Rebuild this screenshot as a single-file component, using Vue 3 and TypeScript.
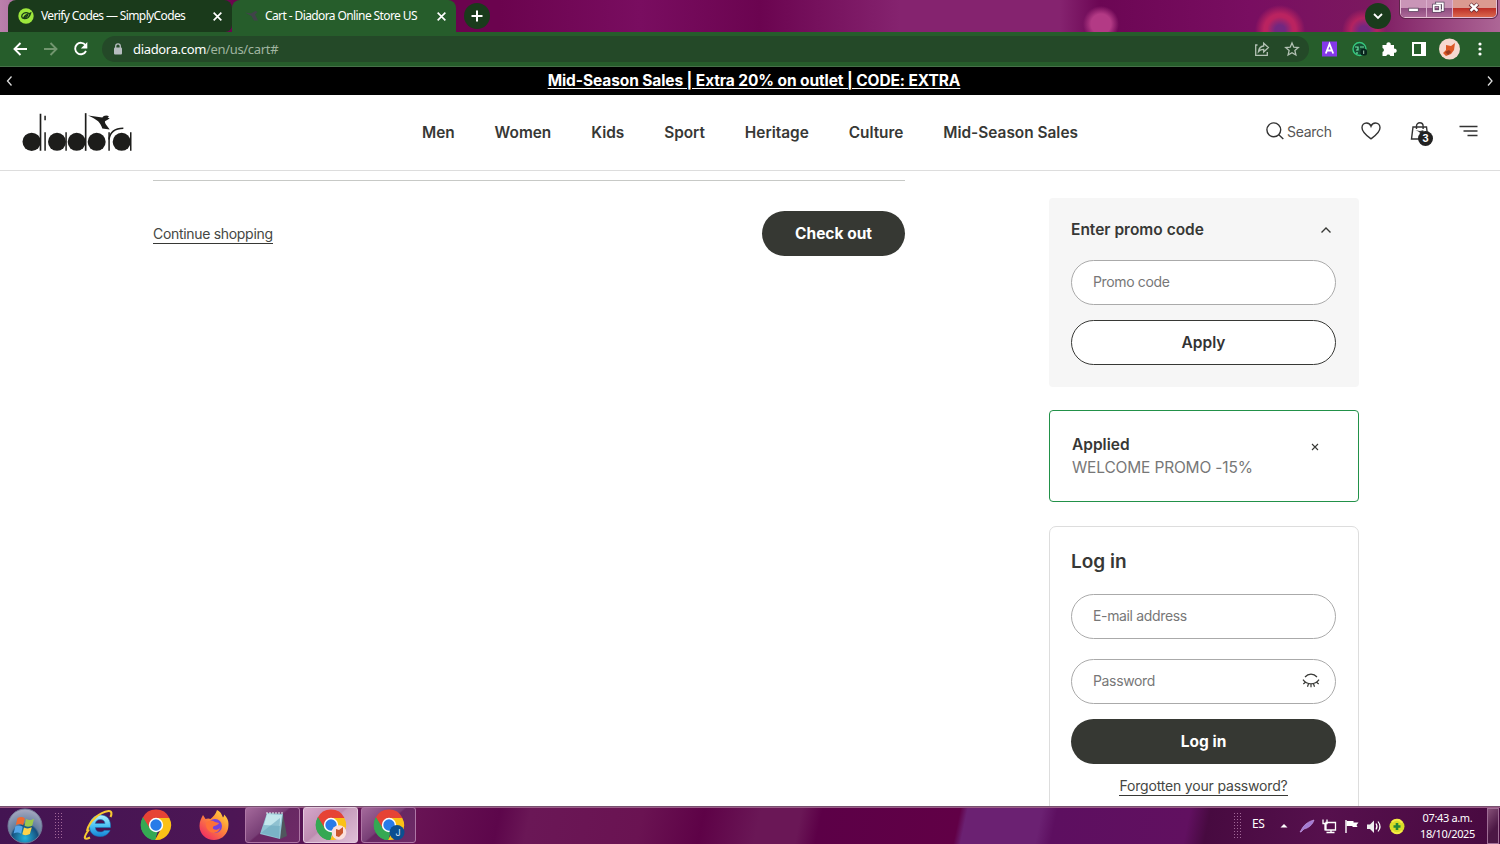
<script setup lang="ts">
const links: string[] = ['Men', 'Women', 'Kids', 'Sport', 'Heritage', 'Culture', 'Mid-Season Sales']
</script>

<template>
  <div class="screen">
    <div class="tabs">
      <div class="tab idle">
        <svg class="fav" viewBox="0 0 16 16"><circle cx="8" cy="8" r="7.700" fill="#9de83c" /><path d="M10.500 5.200C7 3.500 3.500 6 3.700 8.700c.3 2.500 4.300 2.500 6.500.8 1.700-1.500 2-3.200 2.400-4.500C10 5.700 7 6.500 6 9.300c1.500.3 3-.8 4-2.200" fill="none" stroke="#173a17" stroke-width="1.300" /></svg>
        <span class="t1">Verify Codes — SimplyCodes</span>
        <svg class="close" viewBox="0 0 10 10"><path d="M1.500 1.500l7 7M8.500 1.500l-7 7" stroke="#fff" stroke-width="1.500" /></svg>
      </div>
      <div class="tab active">
        <svg class="fav" viewBox="0 0 13 16"><path d="M0 4.500l6 1 4.500-2.500 2 1-2.500 2.500 3 6H9L6.500 8z" fill="#41434a" /></svg>
        <span class="t2">Cart - Diadora Online Store US</span>
        <svg class="close" viewBox="0 0 10 10"><path d="M1.500 1.500l7 7M8.500 1.500l-7 7" stroke="#fff" stroke-width="1.500" /></svg>
      </div>
      <div class="round plus"><svg viewBox="0 0 26 26"><path d="M13 7.500v11M7.500 13h11" stroke="#fff" stroke-width="2" /></svg></div>
      <div class="round chev"><svg viewBox="0 0 26 26"><path d="M9 11l4 4 4-4" fill="none" stroke="#fff" stroke-width="1.800" /></svg></div>
      <div class="winbtns">
        <div class="wb min"><svg viewBox="0 0 26 17"><rect x="8" y="8.500" width="10" height="3.500" fill="#fff" stroke="#594059" stroke-width=".8" /></svg></div>
        <div class="wb max"><svg viewBox="0 0 26 17"><g fill="none" stroke="#514058" stroke-width="3.200"><path d="M10 5V3.500h6.500v7H15" /><rect x="7" y="5.500" width="6.500" height="6" /></g><g fill="none" stroke="#fff" stroke-width="1.800"><path d="M10 4V3.500h6.500v7H15" /><rect x="7" y="5.500" width="6.500" height="6" /></g></svg></div>
        <div class="wb cls"><svg viewBox="0 0 44 17"><path d="M17.500 4l8 7.500M25.500 4l-8 7.500" stroke="#6b3038" stroke-width="4.200" /><path d="M18 4.200l7 7M25 4.200l-7 7" stroke="#fff" stroke-width="2.600" /></svg></div>
      </div>
    </div>

    <div class="toolbar">
      <svg class="navicons" viewBox="0 0 102 35"><g fill="none" stroke-width="1.900"><path d="M27 17H15M20.500 11l-6 6 6 6" stroke="#fff" /><path d="M44 17h12M50.500 11l6 6-6 6" stroke="#72966f" /><path d="M85.500 13.200A5.700 5.700 0 1 0 86 19" stroke="#fff" /></g><path d="M87.300 10v6.500h-6.500z" fill="#fff" /></svg>
      <div class="address">
        <svg class="lock" viewBox="0 0 10 12"><rect x="1" y="4.500" width="8" height="7" rx="1" fill="#b7bdc0" /><path d="M2.700 5V3.200a2.300 2.300 0 0 1 4.600 0V5" fill="none" stroke="#b7bdc0" stroke-width="1.300" /></svg>
        <span class="url"><b>diadora.com</b>/en/us/cart#</span>
        <svg class="addricons" viewBox="0 0 50 20"><g fill="none" stroke="#b4c2b5" stroke-width="1.300"><path d="M3.500 6H1.700v10.300h11.600V13" /><path d="M4.500 12.500c.5-3.500 2.500-5.300 5.200-5.500V4.200l4.700 4.400-4.700 4.300v-2.600c-2.300 0-4 .7-5.200 2.200z" /><path d="M38 4l1.800 4.200 4.500.4-3.400 3 1 4.400-3.900-2.300L34.100 16l1-4.400-3.400-3 4.500-.4z" /></g></svg>
      </div>
      <svg class="extensions" viewBox="0 0 180 35">
        <rect x="2" y="9.500" width="15" height="15" fill="#8538ea" /><path d="M5.800 21.500L9.500 12l3.700 9.500M7 18.500h5" stroke="#fff" stroke-width="1.800" fill="none" />
        <circle cx="39.500" cy="17" r="6.500" fill="#164e33" stroke="#35c77d" stroke-width="1.400" /><path d="M35 15h3v3h-2m4-3h4m-7 5v2" stroke="#70e5a5" stroke-width="1.200" fill="none" /><rect x="40.500" y="17" width="6.500" height="6.500" rx="2" fill="#07251c" /><path d="M43.700 18.500v3.500" stroke="#a1cdb3" />
        <path d="M62.500 13h4a2.200 2.200 0 1 1 4.200 0H74v3.700a2.100 2.100 0 1 1 0 4V24h-3.700a2.100 2.100 0 0 0-4 0h-3.800v-4a2.100 2.100 0 0 0 0-4z" fill="#fff" />
        <path d="M93 11h12v12H93z" fill="none" stroke="#fff" stroke-width="2" /><path d="M101 10h5v14h-5z" fill="#fff" />
        <circle cx="129.500" cy="17" r="10.500" fill="#f7d8cf" /><path d="M126 13l5 1 4-3-1 7-3 4-5 2-3-3 3-3z" fill="#db5725" /><path d="M125 20l4-2 2 2-3 3z" fill="#9d3b20" />
        <circle cx="160" cy="12" r="1.600" fill="#fff" /><circle cx="160" cy="17" r="1.600" fill="#fff" /><circle cx="160" cy="22" r="1.600" fill="#fff" />
      </svg>
    </div>

    <div class="banner">
      <svg viewBox="0 0 8 12"><path d="M6.500 1.500L2.500 6l4 4.500" /></svg>
      <a>Mid-Season Sales | Extra 20% on outlet | CODE: EXTRA</a>
      <svg viewBox="0 0 8 12"><path d="M2 1.500L6 6l-4 4.500" /></svg>
    </div>

    <header>
      <svg class="logo" viewBox="66 54 330 116" fill="#1d1d1b">
        <circle cx="95" cy="140" r="27.500" /><path d="M119 56h5v111h-5zM133 111h4.500v56H133zM133 62h4.500v13H133z" />
        <circle cx="171" cy="140" r="27" /><path d="M196 111h4.500v56H196z" /><circle cx="230" cy="140" r="27" /><path d="M254.500 54h5v113h-5z" />
        <circle cx="290" cy="140" r="27" /><path d="M325 111h4.500v56H325z" /><path d="M327 133c3-23 17-34 43-34" fill="none" stroke="#1d1d1b" stroke-width="4.500" /><circle cx="365" cy="140" r="27" /><path d="M390 111h4.500v56H390z" />
        <path d="M264 61c15 1 28 5 43 6 3-7 14-8 20-4l-4 4 6 3-14 8c-2 6 8 15 14 25l-22-3c-5-17-14-27-43-39z" />
      </svg>
      <nav><a v-for="link in links" :key="link">{{ link }}</a></nav>
      <div class="tools">
        <svg class="search" viewBox="0 0 18 18"><circle cx="7.800" cy="7.800" r="6.900" /><path d="M12.800 12.800l4.500 4.300" /></svg>
        <span>Search</span>
        <svg class="heart" viewBox="0 0 20 18"><path d="M10 16.800C7 14.500 1 10.500 1 5.700 1 3 3 1 5.500 1 7.500 1 9.300 2.300 10 4.200 10.700 2.300 12.500 1 14.500 1 17 1 19 3 19 5.700c0 4.800-6 8.800-9 11.100z" /></svg>
        <div class="bag">
          <svg viewBox="0 0 20 18"><path d="M3 5h13.500L18 17H1.500zM6.500 7V4a3.300 3.300 0 0 1 6.600 0v3" /><path d="M5.500 8.200l4.500.8 3-.8 1 1-2 1 .5 2-2-.5C10 10.200 8 9.200 5.500 8.200z" fill="#333" stroke="none" /></svg>
          <i>3</i>
        </div>
        <svg class="menu" viewBox="0 0 20 12"><path d="M.5 1.500h18M4.500 6h14M8.500 10.500h10" /></svg>
      </div>
    </header>

    <main>
      <section class="cart">
        <a class="continue">Continue shopping</a>
        <button class="dark checkout">Check out</button>
      </section>
      <aside>
        <div class="promo">
          <div class="heading"><h3>Enter promo code</h3><svg viewBox="0 0 12 8"><path d="M1.500 6.500L6 2l4.500 4.500" fill="none" stroke="#373835" stroke-width="1.400" /></svg></div>
          <div class="field"><span class="pc">Promo code</span></div>
          <button class="apply">Apply</button>
        </div>
        <div class="applied">
          <div><h3>Applied</h3><p>WELCOME PROMO -15%</p></div>
          <svg viewBox="0 0 8 8"><path d="M1 1l6 6M7 1L1 7" stroke="#373835" stroke-width="1.100" /></svg>
        </div>
        <div class="login">
          <h2>Log in</h2>
          <div class="field"><span class="em">E-mail address</span></div>
          <div class="field second"><span class="pw">Password</span>
            <svg viewBox="0 0 18 16"><g fill="none" stroke="#373835" stroke-width="1.200"><path d="M3 4c3.400-3.900 8.600-3.900 12 0M1 6.700c4 5.500 12 5.500 16 0M3.800 9l-2.500 2M6.500 10.700l-1 3M9 11v3.300M11.500 10.700l1 3M14.200 9l2.500 2" /></g></svg>
          </div>
          <button class="dark signin">Log in</button>
          <a class="forgot">Forgotten your password?</a>
        </div>
      </aside>
    </main>

    <footer>
      <svg class="orb" viewBox="0 0 36 36"><defs><radialGradient id="orb" cx=".5" cy=".85" r=".8"><stop stop-color="#24b5dd" /><stop offset=".48" stop-color="#164e7d" /><stop offset=".55" stop-color="#637f9f" /><stop offset="1" stop-color="#a1a5bd" /></radialGradient></defs><circle cx="18" cy="18" r="17" fill="url(#orb)" stroke="#737b98" /><path d="M10.500 10c3-1.500 5-1.200 7.300.2l-1.600 7c-2.700-1.500-4.500-1.500-7.400-.2z" fill="#ef6a31" /><path d="M19 11c3 1.500 5 1.200 8-.3l-1.800 7c-2.700 1.200-5 1.400-7.700.1z" fill="#9bc84e" /><path d="M8.300 18.500c3-1.300 5-1.200 7.400.2l-1.600 7c-2.600-1.600-4.700-1.500-7.500-.2z" fill="#55a6ea" /><path d="M17 19.500c3 1.300 5 1.200 7.800-.2l-1.900 6.800c-2.700 1.300-5 1.500-7.600.2z" fill="#fed34b" /></svg>
      <div class="grip"></div>
      <div class="slot"><svg viewBox="0 0 32 32"><defs><linearGradient id="ie" x2="0" y2="1"><stop stop-color="#b5f3ff" /><stop offset=".5" stop-color="#4bc2f4" /><stop offset="1" stop-color="#1584d5" /></linearGradient></defs><path d="M28 21.500C26 25.500 22.500 27.500 18 27.500c-6.500 0-10.500-4-10.500-10C7.500 10.500 12 6 18.500 6 25.500 6 29 11 28.500 18.500H13.300c.3 3 2 4.500 4.800 4.500 2 0 3.200-.5 4-1.500zM13.300 14.500h9.700c-.3-2.700-2-4-4.700-4s-4.500 1.300-5 4z" fill="url(#ie)" stroke="#167abc" stroke-width=".6" /><path d="M7 20.500C1.500 28 1 32 8 28.500M5 22C7 12 18 3 26.500 2c3.500-.3 3.500 3 2 6" fill="none" stroke="#f7c832" stroke-width="2.100" /></svg></div>
      <div class="slot"><svg viewBox="0 0 32 32"><g id="chrome"><path d="M16 16L2.500 9A15 15 0 0 1 29.500 9z" fill="#e64335" /><path d="M16 16v15A15 15 0 0 1 2.700 8.600z" fill="#35a853" /><path d="M16 9h13.300A15 15 0 0 1 15 31l6.500-12z" fill="#fbc116" /><path d="M3 8.500L10 20l6-4V9z" fill="#e64335" /><path d="M3 8.500L10 20l8 2-3 9A15 15 0 0 1 3 8.500z" fill="#35a853" /><circle cx="16" cy="16" r="7.200" fill="#fff" /><circle cx="16" cy="16" r="5.700" fill="#287be8" /></g></svg></div>
      <div class="slot"><svg viewBox="0 0 32 32"><defs><linearGradient id="fx" x1="1" y1="0" x2=".2" y2="1"><stop stop-color="#ffe643" /><stop offset=".45" stop-color="#ff9037" /><stop offset="1" stop-color="#ef2865" /></linearGradient></defs><path d="M1.500 17c0-5 2-8 3.500-11l2.500 4c2-.8 3.500-.8 5 0C15 8 18 5 19 1c5 2.500 5 6 6 7.500 1-1.200 1-2 1-3C31 10 31 15 30 20c-2 7-7.500 11-14 11C8 31 1.500 25 1.500 17z" fill="url(#fx)" /><circle cx="17" cy="17" r="7" fill="#7542dd" /><path d="M8 14c3-3 6-3 9-1l4 1c-1 3-5 2-6 4-1 3 4 4 7 1-1 5-8 7-12 2-2-2-2-4-2-7z" fill="#ff7139" /></svg></div>
      <div class="slot task"><svg viewBox="0 0 32 32"><path d="M10 4l16 1 4 22-7 3z" fill="#4f565d" /><path d="M10 4l16 1-3 25-20-5z" fill="#8fc3d3" /><path d="M10 5l15 1-2 11L7 16z" fill="#c3e6ec" /><path d="M4 24L23 9l-1 20z" fill="#6ca9be" opacity=".6" /><path d="M10 3v2m3-2v2m3-2v2m3-2v2m3-2v2m3-2v2" stroke="#e9f6f7" /></svg></div>
      <div class="slot task current"><svg viewBox="0 0 32 32"><use href="#chrome" /><circle cx="24" cy="23.500" r="7.300" fill="#fbe0dc" /><path d="M21 20l3 1 4-3v6l-4 4-3-1z" fill="#cb552d" /></svg></div>
      <div class="slot task"><svg viewBox="0 0 32 32"><use href="#chrome" /><circle cx="24" cy="23.500" r="7.500" fill="#0c4f90" /><text x="22.500" y="26.500" font-size="9" fill="#d7e9fb" font-family="Inter">J</text></svg></div>
      <div class="grip trayg"></div>
      <span class="lang">ES</span>
      <svg class="tray" viewBox="0 0 130 24"><path d="M.5 13.500L4 10l3.500 3.500z" fill="#fff" /><path d="M20 18l3-5c3-4 7-6 11-7-1 4-5 8-10 9l-3 3z" fill="#a27bd2" stroke="#c9a5eb" stroke-width=".6" /><g fill="none" stroke="#fff" stroke-width="1.300"><path d="M46 8.500h9.500v7.500H46zM46.500 18.500h8M51 16v3M43 5.500v4h4v-4M45 9.500v7" /></g><path d="M66 6v13" stroke="#fff" stroke-width="1.400" /><path d="M66.500 7h7v1.500h5l-2 2.500 1 2h-5v-1h-6z" fill="#fff" /><path d="M87 10.500h3l4-4v12.500l-4-4h-3z" fill="#eee" /><path d="M96 9.500q2 3 0 6M98 7.500q4 5 0 10" stroke="#fff" stroke-width="1.200" fill="none" /><circle cx="117" cy="12.500" r="7.500" fill="#d8dc28" /><path d="M112 8a6 6 0 0 1 10 1M122 16.500a6 6 0 0 1-10 0" stroke="#f7eb45" stroke-width="2" fill="none" /><path d="M117 9v7M113.500 12.500h7" stroke="#238638" stroke-width="2.600" /></svg>
      <div class="clock"><span>07:43 a.m.</span><span>18/10/2025</span></div>
      <div class="desktop"></div>
    </footer>
  </div>
</template>

<style>
body { overflow: hidden; }
</style>
<style scoped>
* { box-sizing: border-box; }
svg { display: block; flex: none; }
h2, h3, p { margin: 0; }
button { font: inherit; padding: 0; }
.screen { width: 1500px; height: 844px; overflow: hidden; display: flex; flex-direction: column; background: #fff; color: #373835; font-family: Inter, "Liberation Sans", sans-serif; }
.tabs { height: 32px; flex: none; display: flex; padding-left: 8px; font: 12px "Noto Sans", "Open Sans", sans-serif; color: #fff; white-space: nowrap;
  background: radial-gradient(circle at 1101px 24px, #b33a85 0 10px, #b33a8500 18px), radial-gradient(circle at 1280px 30px, #722780 0 5px, #ba2360 13px 16px, #ba236000 25px), radial-gradient(circle at 1364px 31px, #742780 0 5px, #b32360 13px, #b3236000 22px), linear-gradient(90deg, #bb80ac 0, #b578a7 10px, #6b034e 235px, #6b034e 500px, #790d60 640px, #6b0450 760px, #85236f 900px, #85236f 1060px, #6c0654 1100px, #790e61 1250px, #7b185f 1370px, #ad6696 1500px); }
.tab { width: 224px; height: 32px; display: flex; align-items: center; }
.idle { background: #1a3a1b; border-radius: 8px 8px 7px 0; padding-left: 10px; }
.active { background: #265d2b; border-radius: 8px 8px 0 0; padding-left: 13px; }
.fav { width: 16px; height: 16px; margin-right: 7px; }
.active .fav { width: 13px; margin-right: 7px; }
.t1 { width: 144px; letter-spacing: -.62px; margin-top: -1px; }
.t2 { width: 153px; letter-spacing: -.6px; margin-top: -1px; }
.close { width: 11px; height: 11px; margin-left: 27px; }
.active .close { margin-left: 18px; }
.round { width: 26px; height: 26px; background: #1a3b1c; border-radius: 50%; margin-top: 3px; }
.plus { margin-left: 8px; }
.chev { margin-left: auto; margin-right: 9px; }
.winbtns { width: 97px; height: 18px; margin-right: 3px; display: flex; border: 1px solid #e5bfd4; outline: 1px solid #5d2449; border-top: 0; border-radius: 0 0 5px 5px; overflow: hidden; }
.wb { border-right: 1px solid #dab0cd; background: linear-gradient(#c995b7 0 45%, #8f4d80 50%, #ac6998); }
.min, .max { width: 26px; }
.cls { flex: 1; border: 0; background: linear-gradient(#db9a91 0 45%, #bd3028 50%, #da674e); }
.toolbar { height: 35px; flex: none; background: #265d2b; border-bottom: 1px solid #467149; display: flex; }
.navicons { width: 102px; height: 35px; }
.address { width: 1207px; height: 26px; margin-top: 4px; border-radius: 13px; background: #244928; display: flex; align-items: center; padding-left: 11px; }
.lock { width: 10px; height: 12px; margin-right: 10px; }
.url { font: 13px "Noto Sans", "Open Sans", sans-serif; color: #a0b5a0; letter-spacing: -.33px; }
.url b { font-weight: 400; color: #fff; }
.addricons { width: 50px; height: 20px; margin-left: auto; margin-right: 5px; }
.extensions { width: 180px; height: 35px; margin-left: 11px; }
.banner { height: 28px; flex: none; background: #000; color: #fff; display: flex; align-items: center; justify-content: space-between; padding: 0 6px 0 5px; font-size: 15.500px; font-weight: 700; }
.banner a { text-decoration: underline; text-underline-offset: 2px; text-decoration-thickness: 1px; letter-spacing: -.1px; margin: -2px 0 0 9px; }
.banner svg { width: 8px; height: 12px; fill: none; stroke: #ddd; stroke-width: 1.3; }
header { height: 76px; flex: none; border-bottom: 1px solid #ddd; display: flex; position: relative; }
.logo { width: 110px; height: 39px; margin: 18px 0 0 22px; }
nav { width: 656px; margin-left: 290px; display: flex; justify-content: space-between; font-size: 15.400px; font-weight: 600; line-height: 75px; }
nav a { white-space: nowrap; }
.tools { display: flex; margin-left: auto; padding: 27px 21px 0 0; color: #555; font-size: 14px; }
.tools svg { fill: none; stroke: #333; stroke-width: 1.4; }
.tools span { width: 45px; line-height: 20px; margin-left: 3px; white-space: nowrap; letter-spacing: -.3px; }
.search { width: 18px; height: 18px; }
.heart { width: 20px; height: 18px; margin-left: 29px; }
.bag { position: relative; width: 20px; margin-left: 29px; }
.bag svg { width: 20px; height: 18px; }
.bag i { position: absolute; left: 8px; top: 9px; width: 15px; height: 15px; border-radius: 50%; background: #222; color: #fff; font: 700 10px/15px Inter; text-align: center; }
.menu { width: 20px; height: 12px; margin: 3px 0 0 29px; }
main { flex: 1; min-height: 0; display: flex; overflow: hidden; }
.cart { width: 752px; height: 86px; margin: 9px 0 0 153px; border-top: 1px solid #c7c9c6; display: flex; justify-content: space-between; align-items: flex-start; padding-top: 30px; }
.continue, .forgot { font-size: 14px; line-height: 17px; border-bottom: 1px solid #373835; color: #454743; }
.continue { margin-top: 14px; letter-spacing: -.31px; line-height: 18px; }
.dark { background: #363833; color: #fff; border: 0; border-radius: 23px; height: 45px; font-size: 15.500px; font-weight: 700; }
.checkout { width: 143px; }
aside { width: 309.500px; margin: 27px 0 0 144px; }
.promo { background: #f6f6f6; height: 189px; padding: 22px 22.500px 0 22px; border-radius: 4px; }
.heading { height: 20px; display: flex; justify-content: space-between; align-items: center; padding-right: 4px; margin-bottom: 20px; }
.heading svg { width: 12px; height: 8px; }
h3 { font-size: 15.500px; font-weight: 600; line-height: 20px; }
.field { height: 45px; border: 1px solid #aaa; border-radius: 23px; background: #fff; padding: 0 15px 2px 21px; display: flex; align-items: center; justify-content: space-between; color: #777; font-size: 14px; letter-spacing: -.35px; }
.field svg { width: 18px; height: 16px; }
.apply { width: 100%; height: 45px; margin-top: 15px; border: 1px solid #373835; border-radius: 23px; background: #fff; font-size: 15.500px; font-weight: 600; color: #333; }
.applied { height: 92px; margin-top: 23px; border: 1px solid #229149; border-radius: 4px; padding: 24px 39px 0 22px; display: flex; justify-content: space-between; }
.applied p { color: #777; font-size: 15.500px; line-height: 25px; white-space: nowrap; letter-spacing: -.17px; }
.applied svg { width: 8px; height: 8px; margin-top: 8px; }
.login { height: 300px; margin-top: 24px; border: 1px solid #ddd; border-radius: 7px; padding: 23px 21.500px 0 21px; display: flex; flex-direction: column; }
h2 { font-size: 19px; font-weight: 600; line-height: 24px; margin-bottom: 20px; }
.login .field { flex: none; }
.second { margin-top: 20px; }
.signin { flex: none; margin-top: 15px; }
.forgot { align-self: center; margin-top: 13px; line-height: 18px; letter-spacing: -.18px; }
footer { height: 38px; flex: none; display: flex; align-items: center; border-top: 1px solid #76516f; box-shadow: inset 0 1px #9b5b87; color: #fff; font: 11px "Noto Sans", "Open Sans", sans-serif;
 background: linear-gradient(102deg, #431452 0, #4d1655 230px, #681354 410px, #5d064b 490px, #6a1756 520px, #6a1352 630px, #5e0247 690px, #6a1756 745px, #6a1756 785px, #5c0047 805px, #610046 940px, #6b2172 947px, #6b2172 1020px, #5d0f60 1035px, #611060 1165px, #470a40 1185px, #56104d 1300px, #47093f 1475px); }
.orb { width: 36px; height: 36px; margin-left: 7px; }
.grip { width: 8px; height: 28px; margin: 0 7px 0 11px; background: radial-gradient(circle, #a26898 0 .6px, transparent .9px) 0 0 / 3px 3px; }
.slot { width: 58px; height: 37px; display: grid; place-items: center; }
.slot svg { width: 32px; height: 32px; margin-top: -1px; }
.task { width: 55px; height: 36px; margin-left: 3px; margin-top: -1px; border: 1px solid #ae76a5; border-radius: 3px; background: linear-gradient(140deg, #a4699b, #783f76 45%, #682863 48%, #6e2a67); position: relative; left: -1px; }
.current { border-color: #e4cadd; background: linear-gradient(140deg, #d6a8cb, #bd8bb0 45%, #c79dbc 48%, #dfbed6); }
.trayg { margin: 0 11px 0 auto; }
.lang { width: 28px; margin-top: -5px; font-size: 12px; letter-spacing: -.3px; }
.tray { width: 130px; height: 24px; }
.clock { width: 75px; display: flex; flex-direction: column; text-align: center; line-height: 15.500px; letter-spacing: -.35px; margin-right: -3px; }
.desktop { width: 12px; height: 36px; border: 1px solid #a06e96; margin-left: 5px; margin-right: 1px; background: linear-gradient(130deg, #865078, #4c1745 60%); }
</style>
